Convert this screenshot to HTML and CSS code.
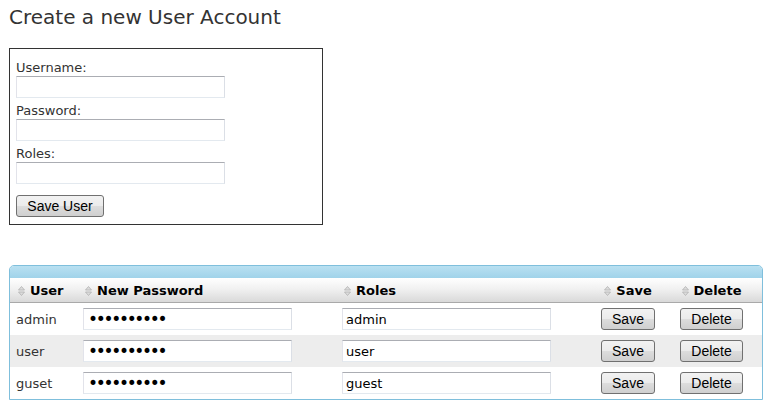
FILE: index.html
```html
<!DOCTYPE html>
<html>
<head>
<meta charset="utf-8">
<title>Users</title>
<link rel="stylesheet" href="styles.css">
</head>
<body>
<h1 class="title">Create a new User Account</h1>
<form class="new-user">
  <div class="field">
    <label class="label">Username:</label>
    <input class="text" type="text">
  </div>
  <div class="field">
    <label class="label">Password:</label>
    <input class="text" type="password">
  </div>
  <div class="field">
    <label class="label">Roles:</label>
    <input class="text" type="text">
  </div>
  <button class="btn btn-save-user" type="button">Save User</button>
</form>

<div class="grid">
  <div class="grid-bar"></div>
  <table class="users">
    <colgroup>
      <col class="c-user"><col class="c-pass"><col class="c-roles"><col class="c-save"><col class="c-del">
    </colgroup>
    <thead>
      <tr>
        <th class="left"><span class="sort"><svg width="7" height="10" viewBox="0 0 7 10"><path d="M3.5 0.5 L6.5 4 H0.5 Z M0.5 6 H6.5 L3.5 9.5 Z" fill="#dcdcdc" stroke="#b0b0b0" stroke-width="0.8"/></svg></span>User</th>
        <th class="left"><span class="sort"><svg width="7" height="10" viewBox="0 0 7 10"><path d="M3.5 0.5 L6.5 4 H0.5 Z M0.5 6 H6.5 L3.5 9.5 Z" fill="#dcdcdc" stroke="#b0b0b0" stroke-width="0.8"/></svg></span>New Password</th>
        <th class="left"><span class="sort"><svg width="7" height="10" viewBox="0 0 7 10"><path d="M3.5 0.5 L6.5 4 H0.5 Z M0.5 6 H6.5 L3.5 9.5 Z" fill="#dcdcdc" stroke="#b0b0b0" stroke-width="0.8"/></svg></span>Roles</th>
        <th class="center"><span class="sort"><svg width="7" height="10" viewBox="0 0 7 10"><path d="M3.5 0.5 L6.5 4 H0.5 Z M0.5 6 H6.5 L3.5 9.5 Z" fill="#dcdcdc" stroke="#b0b0b0" stroke-width="0.8"/></svg></span>Save</th>
        <th class="center"><span class="sort"><svg width="7" height="10" viewBox="0 0 7 10"><path d="M3.5 0.5 L6.5 4 H0.5 Z M0.5 6 H6.5 L3.5 9.5 Z" fill="#dcdcdc" stroke="#b0b0b0" stroke-width="0.8"/></svg></span>Delete</th>
      </tr>
    </thead>
    <tbody>
      <tr>
        <td>admin</td>
        <td><input class="text cell-input pass" type="password" value="abcdefghij"></td>
        <td><input class="text cell-input" type="text" value="admin"></td>
        <td class="center"><button class="btn" type="button">Save</button></td>
        <td class="center"><button class="btn" type="button">Delete</button></td>
      </tr>
      <tr class="alt">
        <td>user</td>
        <td><input class="text cell-input pass" type="password" value="abcdefghij"></td>
        <td><input class="text cell-input" type="text" value="user"></td>
        <td class="center"><button class="btn" type="button">Save</button></td>
        <td class="center"><button class="btn" type="button">Delete</button></td>
      </tr>
      <tr>
        <td>guset</td>
        <td><input class="text cell-input pass" type="password" value="abcdefghij"></td>
        <td><input class="text cell-input" type="text" value="guest"></td>
        <td class="center"><button class="btn" type="button">Save</button></td>
        <td class="center"><button class="btn" type="button">Delete</button></td>
      </tr>
    </tbody>
  </table>
</div>
</body>
</html>
```

FILE: styles.css
```css
html, body {
  margin: 0;
  padding: 0;
  background: #fff;
}
body {
  padding: 0 14px 0 9px;
  font-family: "DejaVu Sans", Verdana, sans-serif;
  font-size: 13px;
  color: #333;
}
.title {
  margin: 5px 0 19px 0;
  font-size: 20px;
  line-height: 24px;
  font-weight: normal;
  color: #333;
}
.new-user {
  box-sizing: border-box;
  width: 314px;
  margin: 0;
  border: 1px solid #333;
  padding: 11px 6px 7px 6px;
}
.field {
  margin-bottom: 5px;
}
.label {
  display: block;
  line-height: 16px;
}
.text {
  box-sizing: border-box;
  display: block;
  width: 209px;
  height: 22px;
  margin: 0;
  padding: 0 3px;
  border: 1px solid;
  border-color: #abadb3 #dbdfe6 #e3e9ef #e2e3ea;
  background: #fff;
  font-family: "DejaVu Sans", Verdana, sans-serif;
  font-size: 13px;
  color: #000;
  outline: none;
}
.pass {
  font-size: 17px;
  letter-spacing: -2.3px;
  padding-left: 4px;
}
.btn {
  box-sizing: border-box;
  height: 22px;
  margin: 0;
  padding: 0 10px;
  border: 1px solid #707070;
  border-radius: 3px;
  background: linear-gradient(#f2f2f2 0%, #ebebeb 50%, #dddddd 51%, #cfcfcf 100%);
  font-family: "Liberation Sans", Arial, sans-serif;
  font-size: 14px;
  color: #000;
  line-height: 20px;
}
.btn-save-user {
  display: block;
  margin-top: 11px;
  width: 88px;
  padding: 0;
}
.grid {
  margin-top: 40px;
  width: 754px;
  box-sizing: border-box;
  border: 1px solid #7fbfdc;
  border-radius: 5px 5px 0 0;
  overflow: hidden;
}
.grid-bar {
  height: 12px;
  background: linear-gradient(#b9e0f1, #a0d3ea);
}
.users {
  width: 752px;
  border-collapse: collapse;
  table-layout: fixed;
}
.c-user { width: 67px; }
.c-pass { width: 259px; }
.c-roles { width: 259px; }
.c-save { width: 66px; }
.c-del { width: 101px; }
.users th {
  height: 24px;
  padding: 0 0 0 8px;
  border-bottom: 1px solid #a9a9a9;
  background: linear-gradient(#ffffff 0%, #f1f1f1 45%, #d9d9d9 100%);
  font-weight: bold;
  color: #000;
  white-space: nowrap;
  vertical-align: middle;
}
.users th.left { text-align: left; }
.users th.center { text-align: center; padding: 0; }
.sort {
  display: inline-block;
  width: 7px;
  height: 10px;
  margin-right: 5px;
  vertical-align: -1px;
}
.sort svg { display: block; }
.users td {
  height: 32px;
  padding: 0 6px;
  vertical-align: middle;
  color: #333;
}
.users td.center {
  text-align: center;
  padding: 0;
}
.users tr.alt td {
  background: #ededed;
}
```
